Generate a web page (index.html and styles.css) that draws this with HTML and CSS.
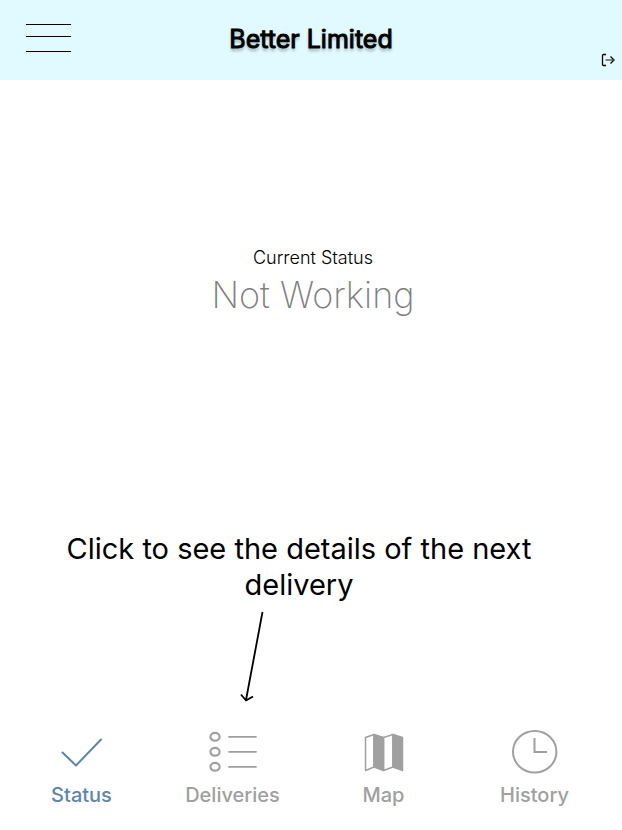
FILE: index.html
```
<!DOCTYPE html>
<html lang="en">
<head>
<meta charset="utf-8">
<meta name="viewport" content="width=device-width, initial-scale=1">
<title>Better Limited</title>
<link rel="stylesheet" href="styles.css">
</head>
<body>
<header class="bar">
  <button class="icon-button menu" type="button" aria-label="Menu">
    <svg width="45" height="30" viewBox="0 0 45 30" stroke="#000"><path d="M0 1.5H45M0 13.5H45M0 28.5H45"/></svg>
  </button>
  <h1 class="title">Better Limited</h1>
  <button class="icon-button logout" type="button" aria-label="Log out">
    <svg width="14" height="14" viewBox="0 0 14 14" fill="none" stroke="#000" stroke-width="1.3"><path d="M5 1.5H2.5Q1.5 1.5 1.5 2.5V11.5Q1.5 12.5 2.5 12.5H5M9.5 3.500L13 7L9.5 10.500"/><path d="M4.5 7H13" stroke="#444"/></svg>
  </button>
</header>
<main class="content">
  <section class="status">
    <h2 class="status-label">Current Status</h2>
    <p class="status-value">Not Working</p>
  </section>
  <section class="hint">
    <p class="hint-text">Click to see the details of the next delivery</p>
    <svg class="arrow" width="24" height="92" viewBox="0 0 24 92" fill="none" stroke="#000" stroke-width="1.8"><path d="M22.5 1L6 89M1 83.500L6 89.500L13 85.500" stroke-linejoin="round"/></svg>
  </section>
</main>
<nav class="tabs">
  <a class="tab active" href="#status" aria-current="page">
    <svg width="48" height="48" viewBox="0 0 48 48" fill="none" stroke="currentColor" stroke-width="2" stroke-linecap="round" stroke-linejoin="round"><path d="M4.500 24.500L18 37.500L43 11.500"/></svg>
    <span>Status</span>
  </a>
  <a class="tab" href="#deliveries">
    <svg width="50" height="48" viewBox="0 0 50 48" fill="none" stroke="currentColor" stroke-width="1.8" stroke-linecap="round"><g stroke-width="2.2"><ellipse cx="7" cy="8.800" rx="4.600" ry="3.900"/><ellipse cx="7" cy="23.800" rx="4.600" ry="3.900"/><ellipse cx="7" cy="38.800" rx="4.600" ry="3.900"/></g><path d="M21 8.800H48M21 23.800H48M21 38.800H48"/></svg>
    <span>Deliveries</span>
  </a>
  <a class="tab" href="#map">
    <svg width="48" height="48" viewBox="0 0 48 48" stroke="currentColor" stroke-width="1.500" stroke-linejoin="round"><path d="M5.500 9.500L14 6.500V39L5.500 42.500ZM23.500 9.500L33 6.500V39L23.500 42.500Z" fill="none"/><path d="M14 6.500L23.500 9.500V42.500L14 39ZM33 6.500L42.500 9.500V42.500L33 39Z" fill="currentColor"/></svg>
    <span>Map</span>
  </a>
  <a class="tab" href="#history">
    <svg width="48" height="48" viewBox="0 0 48 48" fill="none" stroke="currentColor" stroke-width="2"><ellipse cx="23.700" cy="23.700" rx="21.700" ry="20.800"/><path d="M23.500 10V24H36"/></svg>
    <span>History</span>
  </a>
</nav>
</body>
</html>
```
FILE: styles.css
```
* {
  box-sizing: border-box;
}

body {
  margin: 0;
  min-height: 100vh;
  display: flex;
  flex-direction: column;
  background: #fff;
  color: #000;
  font-family: Inter, "Liberation Sans", sans-serif;
}

h1, h2, p {
  margin: 0;
}

svg {
  display: block;
}

.bar {
  height: 80px;
  padding: 0 7px 0 26px;
  display: grid;
  grid-template-columns: 1fr auto 1fr;
  background: #e0faff;
}

.icon-button {
  padding: 0;
  border: 0;
  background: none;
  cursor: pointer;
}

.menu {
  justify-self: start;
  align-self: start;
  margin-top: 23px;
}

.title {
  align-self: center;
  margin: 0 19px 3px 0;
  font-size: 25px;
  line-height: 32px;
  font-weight: 400;
  -webkit-text-stroke: 1px #000;
  text-shadow: 0 3px 3px rgba(0, 0, 0, 0.3);
}

.logout {
  justify-self: end;
  align-self: end;
  margin-bottom: 13px;
}

.content {
  flex: 1;
  display: flex;
  flex-direction: column;
  justify-content: space-between;
  padding: 166px 24px 25px 20px;
}

.status {
  padding-left: 8px;
  text-align: center;
}

.status-label {
  font-size: 18px;
  line-height: 24px;
  font-weight: 300;
}

.status-value {
  color: #808080;
  font-size: 36px;
  line-height: 50px;
  font-weight: 200;
}

.hint {
  display: flex;
  flex-direction: column;
  align-items: center;
  text-align: center;
}

.hint-text {
  padding-right: 20px;
  font-size: 29px;
  line-height: 36px;
  font-weight: 400;
}

.arrow {
  margin: 8px 114px 0 0;
}

.tabs {
  display: grid;
  grid-template-columns: repeat(4, 1fr);
  padding: 0 12px 22px 6px;
}

.tab {
  display: flex;
  flex-direction: column;
  align-items: center;
  gap: 6px;
  color: #a0a0a0;
  font-size: 20px;
  line-height: 26px;
  font-weight: 500;
  text-decoration: none;
}

.active {
  color: #5c86ae;
}
```
